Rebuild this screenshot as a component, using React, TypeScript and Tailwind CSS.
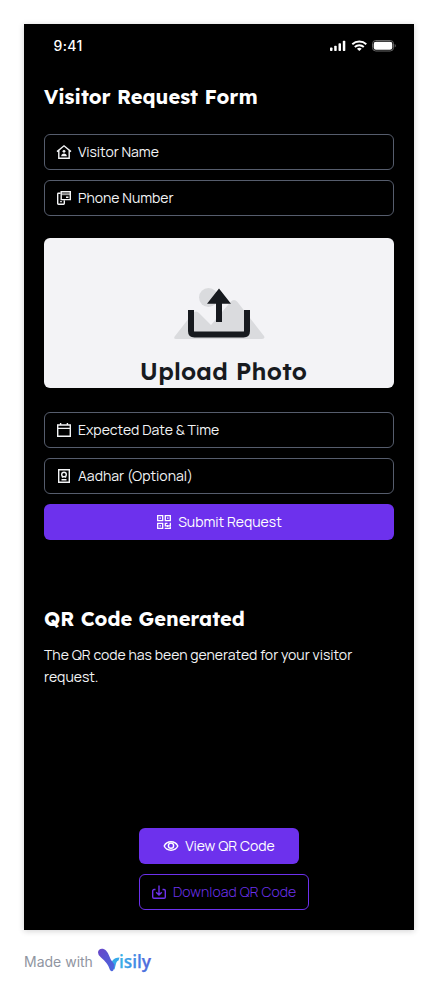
import type { ReactNode } from "react";

const stroke = { fill: "none", stroke: "currentColor", strokeWidth: 1.4 };

function Icon({ children }: { children: ReactNode }) {
  return (
    <svg className="size-4 shrink-0" viewBox="0 0 16 16" {...stroke}>
      {children}
    </svg>
  );
}

function HomeUser() {
  return (
    <Icon>
      <path d="M1 7.6 8 1.8l7 5.8M2.8 6.5v7.8h10.4V6.5" />
      <circle cx="8" cy="7.3" r="1.4" fill="currentColor" stroke="none" />
      <path d="M5.2 12.2c0-3.7 5.6-3.7 5.6 0z" fill="currentColor" stroke="none" />
    </Icon>
  );
}

function PhoneCard() {
  return (
    <Icon>
      <path d="M4.3 3.2H2.4q-.7 0-.7.7v9.7q0 .7.7.7h5.2q.7 0 .7-.7v-3M5.2 1.7h9.1v7.9H5.200z" />
      <path d="M5.500 4.200h8.500" strokeWidth="2" strokeOpacity=".65" />
      <path d="M4.200 11.600h1.600M10 7.300h2.500" />
    </Icon>
  );
}

function Calendar() {
  return (
    <Icon>
      <path d="M1.7 3h12.6v11.3H1.7zM1.7 6.4h12.6M4.6 1v2M11.4 1v2" />
    </Icon>
  );
}

function IdBadge() {
  return (
    <Icon>
      <path d="M2.7 1.7h10.6v12.6H2.7zM5.5 11.7h5" />
      <circle cx="8" cy="6.5" r="2.3" />
      <path d="M6.5 8v1.7M9.5 8v1.7" />
    </Icon>
  );
}

function QrGrid() {
  return (
    <Icon>
      <path d="M1.7 1.7h5v5h-5zM9.3 1.7h5v5h-5zM1.7 9.3h5v5h-5z" strokeWidth="1.3" />
      <path d="M3.5 4.2h1.4M11.1 4.2h1.4M3.5 11.8h1.4M8.7 9.3h2.8M9.3 9.3v2.6h2.2M14.3 8.7v3.1h-2.8M8.7 14.3h5.6v-1.5M11.5 11v2" strokeWidth="1.3" />
    </Icon>
  );
}

function Eye() {
  return (
    <Icon>
      <path d="M1.2 8C3.8 2.4 12.2 2.4 14.8 8 12.2 13.6 3.8 13.6 1.2 8z" />
      <circle cx="8" cy="7.7" r="2.6" />
    </Icon>
  );
}

function Download() {
  return (
    <Icon>
      <path d="M4.5 5.5H3a1.3 1.3 0 0 0-1.3 1.3v6.2A1.3 1.3 0 0 0 3 14.3h10a1.3 1.3 0 0 0 1.3-1.3V6.8A1.3 1.3 0 0 0 13 5.5h-1.5M8 1.5v9.5M5.2 8.3 8 11.1l2.8-2.8" />
    </Icon>
  );
}

function Field({ icon, children }: { icon: ReactNode; children: ReactNode }) {
  return (
    <div className="flex h-9 items-center gap-1.5 rounded-md border border-[#565d6d] px-[11px] text-sm whitespace-nowrap text-[#f3f4f6]">
      {icon}
      {children}
    </div>
  );
}

function StatusBar() {
  return (
    <div className="flex h-11 items-center justify-between pr-[17px] pl-[29.5px] font-[Inter,sans-serif] text-white">
      <span className="text-sm font-medium tracking-[0.4px]">9:41</span>
      <svg className="h-4 w-[68px]" viewBox="0 0 68 16" fill="currentColor">
        <rect x="1" y="9.5" width="2.5" height="3.5" rx=".7" />
        <rect x="5.2" y="7.8" width="2.5" height="5.2" rx=".7" />
        <rect x="9.5" y="5.2" width="2.5" height="7.8" rx=".7" />
        <rect x="13.8" y="2.7" width="2.5" height="10.3" rx=".7" />
        <path d="M23.3 6.2a10.3 10.3 0 0 1 14 0M25.8 9a6.6 6.6 0 0 1 9 0" fill="none" stroke="currentColor" strokeWidth="1.9" />
        <path d="M27.9 10.7a3.6 3.6 0 0 1 4.8 0L30.3 13z" />
        <rect x="43.5" y="2.5" width="21" height="10.5" rx="3.3" fill="none" stroke="#666" />
        <rect x="44.7" y="3.7" width="18.6" height="8.1" rx="2.2" />
        <path d="M65.7 6v3.5c1.5-.6 1.5-2.9 0-3.5z" fill="#666" />
      </svg>
    </div>
  );
}

function UploadPhoto() {
  return (
    <div className="mt-[22px] flex h-[150px] flex-col items-center overflow-hidden rounded-md bg-[#f3f3f6] pt-12 text-[#171a1f]">
      <svg className="h-[56px] w-[92px] shrink-0" viewBox="0 0 92 56">
        <g fill="#dadbde">
          <circle cx="35.5" cy="11.5" r="9.5" />
          <path d="M2 50 20 27q3-3 6 0l12 12 19.500-23q3.500-4 7 0L91 50q1.500 3-2 3H3q-3 0-1-3z" />
        </g>
        <path d="M18 24v21q0 3.500 3.500 3.500h49q3.500 0 3.500-3.500V24" fill="none" stroke="#171a1f" strokeWidth="6" />
        <path d="M46 2.500 58 17.700h-9V36h-6V17.700h-9z" fill="#171a1f" />
      </svg>
      <span className="mt-3.5 pl-[9px] font-[Lexend,Lato,sans-serif] text-2xl leading-[30px] font-semibold tracking-[0.25px] whitespace-nowrap">Upload Photo</span>
    </div>
  );
}

function VisilyLogo() {
  return (
    <svg className="h-7 w-[56px]" viewBox="0 0 56 28">
      <defs>
        <linearGradient id="leaf" x1="0" y1="0" x2="1" y2="1">
          <stop offset="0" stopColor="#6846c8" />
          <stop offset="1" stopColor="#4868df" />
        </linearGradient>
        <linearGradient id="word" x1="0" y1="0" x2="1" y2="0">
          <stop offset="0" stopColor="#38b6e8" />
          <stop offset=".55" stopColor="#4385e4" />
          <stop offset="1" stopColor="#5761d8" />
        </linearGradient>
      </defs>
      <path d="M12.500 20c0-6 2.500-10.500 9-10.500l-1 3c-3 1-2.500 5-4 9z" fill="#35a9e9" />
      <path d="M0 4.500C0 .500 5-.500 8 2.500c3 3 3.500 8 6.500 11.500l2 2.500q0 3-1 5.500-1.500 2.500-3.500 0C10 16 7.500 13.500 3 9.500Q0 7.500 0 4.500z" fill="url(#leaf)" />
      <text x="21" y="20" fill="url(#word)" stroke="url(#word)" strokeWidth=".25" fontFamily="Open Sans, sans-serif" fontSize="18" fontWeight="600" textLength="32" lengthAdjust="spacingAndGlyphs">isily</text>
    </svg>
  );
}

export default function App() {
  return (
    <div className="h-[994px] w-[438px] overflow-hidden bg-white px-6 pt-6 font-[Manrope,Inter,sans-serif]">
      <main className="h-[906px] bg-black shadow-[0_1px_6px_rgba(23,26,31,0.2)]">
        <StatusBar />
        <div className="px-5 pt-[11px]">
          <h1 className="h-9 font-[Lexend,Lato,sans-serif] text-xl leading-9 font-bold whitespace-nowrap text-white">Visitor Request Form</h1>
          <div className="mt-[19px] flex flex-col gap-2.5">
            <Field icon={<HomeUser />}>Visitor Name</Field>
            <Field icon={<PhoneCard />}>Phone Number</Field>
          </div>
          <UploadPhoto />
          <div className="mt-6 flex flex-col gap-2.5">
            <Field icon={<Calendar />}>Expected Date &amp; Time</Field>
            <Field icon={<IdBadge />}>Aadhar (Optional)</Field>
            <button className="flex h-9 items-center justify-center gap-1.5 rounded-md bg-[#6d31ed] text-sm text-white">
              <QrGrid />
              Submit Request
            </button>
          </div>
          <h2 className="mt-[61px] h-9 font-[Lexend,Lato,sans-serif] text-xl leading-9 font-bold whitespace-nowrap text-white">QR Code Generated</h2>
          <p className="mt-[7px] text-sm leading-[22px] whitespace-nowrap text-[#f3f4f6]">
            The QR code has been generated for your visitor
            <br />
            request.
          </p>
          <div className="mt-[140px] ml-[95px] flex flex-col items-start gap-2.5">
            <button className="flex h-9 w-40 items-center justify-center gap-1.5 rounded-md bg-[#6d31ed] text-sm whitespace-nowrap text-white">
              <Eye />
              View QR Code
            </button>
            <button className="flex h-9 w-[170px] items-center gap-1.5 rounded-md border border-[#6d31ed] px-[11px] text-sm font-light whitespace-nowrap text-[#6d31ed]">
              <Download />
              <span className="tracking-[0.1px]">Download QR Code</span>
            </button>
          </div>
        </div>
      </main>
      <footer className="flex h-16 items-center gap-[5px] font-[Inter,sans-serif] text-sm text-[#9095a1]">
        <span className="whitespace-nowrap">Made with</span>
        <VisilyLogo />
      </footer>
    </div>
  );
}
